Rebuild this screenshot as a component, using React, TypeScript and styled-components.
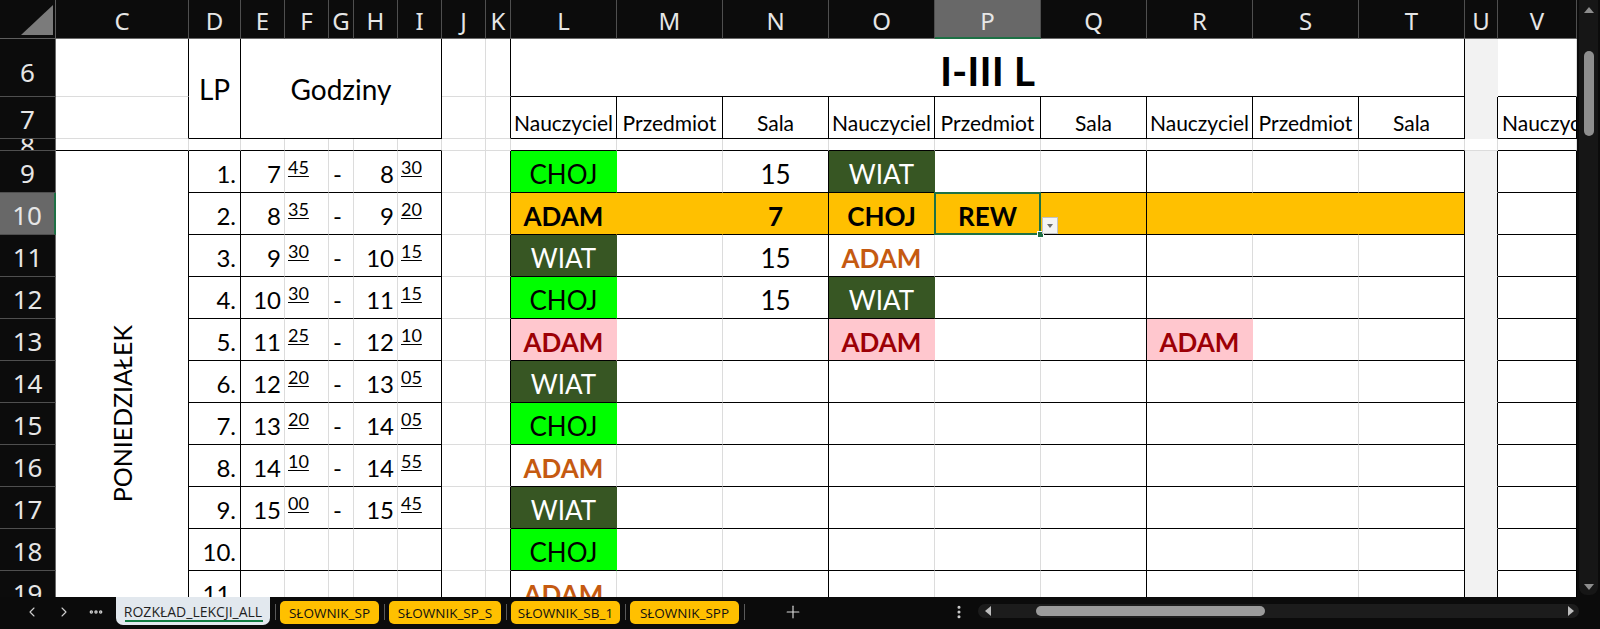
import React from 'react';
import styled, { createGlobalStyle } from 'styled-components';
import { ChevronLeft, ChevronRight, Plus, Ellipsis, EllipsisVertical } from 'lucide-react';

const GlobalStyle = createGlobalStyle`
  html, body {
    margin: 0;
    padding: 0;
    background: #0b0b0b;
    overflow: hidden;
  }
  * {
    box-sizing: border-box;
  }
`;

const GRID = '#dcdcdc';
const BLACK = '#000000';
const WHITE = '#ffffff';
const GREEN = '#00ff00';
const DARK_GREEN = '#375623';
const ORANGE = '#ffc000';
const PINK = '#ffc7ce';
const DARK_RED = '#9c0006';
const RUST = '#c55a11';
const GAP_GRAY = '#f2f2f2';
const SELECT = '#1e7145';

const COLS = ['C', 'D', 'E', 'F', 'G', 'H', 'I', 'J', 'K', 'L', 'M', 'N', 'O', 'P', 'Q', 'R', 'S', 'T', 'U', 'V'];
const WIDTHS = [133, 52, 44, 44, 25, 44, 44, 44, 25, 106, 106, 106, 106, 106, 106, 106, 106, 106, 33, 79];
const FIRST_ROW = 6;
const LAST_ROW = 21;

const KINDS = {
  plain: { size: 24, justify: 'center', items: 'flex-end', pad: '0 0 6px' },
  title: { size: 28, justify: 'center', items: 'center', pad: '0' },
  big: { size: 41, justify: 'center', items: 'flex-end', pad: '0 0 5px' },
  head: { size: 21, justify: 'center', items: 'flex-end', pad: '0 0 5px' },
  headLeft: { size: 21, justify: 'flex-start', items: 'flex-end', pad: '0 0 5px 4px' },
  lp: { size: 24, justify: 'flex-end', items: 'flex-end', pad: '0 4px 6px 0' },
  hour: { size: 24, justify: 'flex-end', items: 'flex-end', pad: '0 3px 6px 0' },
  min: { size: 18, justify: 'flex-start', items: 'flex-end', pad: '0 0 16px 3px' },
  dash: { size: 24, justify: 'flex-start', items: 'flex-end', pad: '0 0 6px 4px' },
  name: { size: 26, justify: 'center', items: 'flex-end', pad: '0 0 5px' },
  day: { size: 25, justify: 'center', items: 'center', pad: '0 0 20px' },
} as const;

type Kind = keyof typeof KINDS;

type Spec = {
  id: string;
  c: number;
  r: number;
  cs: number;
  rs: number;
  bg: string;
  rb: string;
  bb: string;
  text?: string;
  kind: Kind;
  color: string;
  bold: boolean;
  selected?: boolean;
  hidden?: boolean;
};

type Tag = { bg?: string; color?: string; bold?: boolean };

const CHOJ: Tag = { bg: GREEN, color: BLACK };
const WIAT: Tag = { bg: DARK_GREEN, color: WHITE };
const ADAM_PINK: Tag = { bg: PINK, color: DARK_RED, bold: true };
const ADAM_RUST: Tag = { color: RUST, bold: true };
const BOLD: Tag = { bold: true };

const ENTRIES: [string, number, string, Tag][] = [
  ['L', 9, 'CHOJ', CHOJ], ['N', 9, '15', {}], ['O', 9, 'WIAT', WIAT],
  ['L', 10, 'ADAM', BOLD], ['N', 10, '7', BOLD], ['O', 10, 'CHOJ', BOLD], ['P', 10, 'REW', BOLD],
  ['L', 11, 'WIAT', WIAT], ['N', 11, '15', {}], ['O', 11, 'ADAM', ADAM_RUST],
  ['L', 12, 'CHOJ', CHOJ], ['N', 12, '15', {}], ['O', 12, 'WIAT', WIAT],
  ['L', 13, 'ADAM', ADAM_PINK], ['O', 13, 'ADAM', ADAM_PINK], ['R', 13, 'ADAM', ADAM_PINK],
  ['L', 14, 'WIAT', WIAT],
  ['L', 15, 'CHOJ', CHOJ],
  ['L', 16, 'ADAM', ADAM_RUST],
  ['L', 17, 'WIAT', WIAT],
  ['L', 18, 'CHOJ', CHOJ],
  ['L', 19, 'ADAM', ADAM_RUST],
];

const TIMES: [string, string, string, string][] = [
  ['7', '45', '8', '30'],
  ['8', '35', '9', '20'],
  ['9', '30', '10', '15'],
  ['10', '30', '11', '15'],
  ['11', '25', '12', '10'],
  ['12', '20', '13', '05'],
  ['13', '20', '14', '05'],
  ['14', '10', '14', '55'],
  ['15', '00', '15', '45'],
];

const HEADERS = ['Nauczyciel', 'Przedmiot', 'Sala'];

const SHEETS = [
  { name: 'SŁOWNIK_SP', width: 99 },
  { name: 'SŁOWNIK_SP_S', width: 112 },
  { name: 'SŁOWNIK_SB_1', width: 109 },
  { name: 'SŁOWNIK_SPP', width: 109 },
];

const range = (a: string, b: string) => COLS.slice(COLS.indexOf(a), COLS.indexOf(b) + 1);

function buildCells(): Spec[] {
  const map: Record<string, Spec> = {};
  for (let n = FIRST_ROW; n <= LAST_ROW; n++) {
    COLS.forEach((l, i) => {
      map[l + n] = {
        id: l + n, c: i + 2, r: n - 4, cs: 1, rs: 1,
        bg: WHITE, rb: GRID, bb: GRID, kind: 'plain', color: BLACK, bold: false,
      };
    });
  }
  const at = (l: string, n: number) => map[l + n];
  const merge = (from: string, n1: number, to: string, n2: number) => {
    const a = COLS.indexOf(from);
    const b = COLS.indexOf(to);
    for (let n = n1; n <= n2; n++) {
      for (let i = a; i <= b; i++) {
        if (n !== n1 || i !== a) map[COLS[i] + n].hidden = true;
      }
    }
    const cell = map[from + n1];
    cell.cs = b - a + 1;
    cell.rs = n2 - n1 + 1;
    return cell;
  };

  // title block, rows 6-7
  at('C', 6).rb = BLACK;
  at('C', 7).rb = BLACK;
  Object.assign(merge('D', 6, 'D', 7), { rb: BLACK, bb: BLACK, text: 'LP', kind: 'title' });
  Object.assign(merge('E', 6, 'I', 7), { rb: BLACK, bb: BLACK, text: 'Godziny', kind: 'title' });
  at('K', 6).rb = BLACK;
  at('K', 7).rb = BLACK;
  Object.assign(merge('L', 6, 'T', 6), { rb: BLACK, bb: BLACK, text: 'I-III L', kind: 'big', bold: true });
  range('L', 'T').forEach((l, i) => {
    Object.assign(at(l, 7), { rb: BLACK, bb: BLACK, text: HEADERS[i % 3], kind: 'head' });
  });
  at('U', 6).bg = GAP_GRAY;
  Object.assign(at('U', 7), { bg: GAP_GRAY, rb: BLACK });
  at('V', 6).bb = BLACK;
  Object.assign(at('V', 7), { rb: BLACK, bb: BLACK, text: 'Nauczyciel', kind: 'headLeft' });

  // spacer row 8
  range('C', 'I').forEach((l) => { at(l, 8).bb = BLACK; });
  range('L', 'T').forEach((l) => { at(l, 8).bb = BLACK; });
  at('V', 8).bb = BLACK;

  // timetable body
  Object.assign(merge('C', 9, 'C', LAST_ROW), { rb: BLACK, bb: BLACK, text: 'PONIEDZIAŁEK', kind: 'day' });
  for (let n = 9; n <= LAST_ROW; n++) {
    Object.assign(at('D', n), { rb: BLACK, bb: BLACK, text: `${n - 8}.`, kind: 'lp' });
    range('E', 'H').forEach((l) => { at(l, n).bb = BLACK; });
    Object.assign(at('I', n), { rb: BLACK, bb: BLACK });
    at('K', n).rb = BLACK;
    range('L', 'T').forEach((l) => { at(l, n).bb = BLACK; });
    ['N', 'Q', 'T'].forEach((l) => { at(l, n).rb = BLACK; });
    Object.assign(at('U', n), { bg: GAP_GRAY, rb: BLACK });
    Object.assign(at('V', n), { rb: BLACK, bb: BLACK });
    const t = TIMES[n - 9];
    if (t) {
      Object.assign(at('E', n), { text: t[0], kind: 'hour' });
      Object.assign(at('F', n), { text: t[1], kind: 'min' });
      Object.assign(at('G', n), { text: '-', kind: 'dash' });
      Object.assign(at('H', n), { text: t[2], kind: 'hour' });
      Object.assign(at('I', n), { text: t[3], kind: 'min' });
    }
  }
  range('L', 'T').forEach((l) => { at(l, 10).bg = ORANGE; });
  ENTRIES.forEach(([l, n, text, tag]) => {
    const cell = at(l, n);
    cell.text = text;
    cell.kind = 'name';
    if (tag.bg) cell.bg = tag.bg;
    if (tag.color) cell.color = tag.color;
    if (tag.bold) cell.bold = true;
  });
  at('P', 10).selected = true;

  // fills hide the gridlines around them
  Object.values(map).forEach((cell) => {
    if (cell.bg === WHITE) return;
    if (cell.rb === GRID) cell.rb = cell.bg;
    if (cell.bb === GRID) cell.bb = cell.bg;
  });

  return Object.values(map).filter((c) => !c.hidden);
}

const CELLS = buildCells();

const Frame = styled.div`
  width: 1600px;
  height: 629px;
  display: flex;
  flex-direction: column;
  background: #0b0b0b;
`;

const Workspace = styled.div`
  height: 597px;
  display: flex;
`;

const Sheet = styled.div`
  width: 1577px;
  height: 597px;
  overflow: hidden;
  background: #ffffff;
`;

const Grid = styled.div`
  display: grid;
  grid-template-columns: 56px ${WIDTHS.map((w) => `${w}px`).join(' ')};
  grid-template-rows: 39px 58px 42px 12px repeat(13, 42px);
`;

const Corner = styled.div`
  grid-column: 1;
  grid-row: 1;
  background: #0c0c0c;
  border-right: 1px solid #5e5e5e;
  border-bottom: 1px solid #5e5e5e;
`;

const ColHead = styled.div<{ $c: number; $active: boolean }>`
  grid-column: ${(p) => p.$c};
  grid-row: 1;
  display: flex;
  align-items: center;
  justify-content: center;
  padding-top: 4px;
  background: ${(p) => (p.$active ? '#686868' : '#0c0c0c')};
  border-right: 1px solid #4f4f4f;
  border-bottom: ${(p) => (p.$active ? `2px solid ${SELECT}` : '1px solid #6a6a6a')};
  color: #e6e6e6;
  font-family: "Noto Sans", "Open Sans", sans-serif;
  font-size: 24px;
  line-height: 24px;
`;

const RowHead = styled.div<{ $r: number; $active: boolean; $shift: number }>`
  grid-column: 1;
  grid-row: ${(p) => p.$r};
  display: flex;
  align-items: center;
  justify-content: center;
  overflow: hidden;
  padding-top: ${(p) => p.$shift}px;
  background: ${(p) => (p.$active ? '#686868' : '#0c0c0c')};
  border-right: ${(p) => (p.$active ? `2px solid ${SELECT}` : '1px solid #6a6a6a')};
  border-bottom: 1px solid #4f4f4f;
  color: #e6e6e6;
  font-family: "Noto Sans", "Open Sans", sans-serif;
  font-size: 26px;
  line-height: 26px;
`;

const Cell = styled.div<{
  $c: number; $r: number; $cs: number; $rs: number;
  $bg: string; $rb: string; $bb: string;
  $size: number; $bold: boolean; $color: string;
  $justify: string; $items: string; $pad: string;
  $underline: boolean; $selected: boolean;
}>`
  grid-column: ${(p) => p.$c} / span ${(p) => p.$cs};
  grid-row: ${(p) => p.$r} / span ${(p) => p.$rs};
  display: flex;
  justify-content: ${(p) => p.$justify};
  align-items: ${(p) => p.$items};
  padding: ${(p) => p.$pad};
  min-width: 0;
  background: ${(p) => p.$bg};
  border-right: 1px solid ${(p) => p.$rb};
  border-bottom: 1px solid ${(p) => p.$bb};
  color: ${(p) => p.$color};
  font-family: Lato, "Open Sans", sans-serif;
  font-size: ${(p) => p.$size}px;
  line-height: ${(p) => p.$size}px;
  font-weight: ${(p) => (p.$bold ? 700 : 400)};
  white-space: nowrap;
  text-decoration: ${(p) => (p.$underline ? 'underline' : 'none')};
  text-decoration-thickness: 1px;
  text-underline-offset: 2px;
  position: ${(p) => (p.$selected ? 'relative' : 'static')};
  z-index: ${(p) => (p.$selected ? 3 : 'auto')};
`;

const DayText = styled.span`
  writing-mode: vertical-rl;
  transform: rotate(180deg);
`;

const Selection = styled.div`
  position: absolute;
  top: -1px;
  left: -1px;
  right: -1px;
  bottom: -1px;
  border: 2px solid ${SELECT};
  pointer-events: none;
`;

const FillHandle = styled.div`
  position: absolute;
  right: -5px;
  bottom: -5px;
  width: 7px;
  height: 7px;
  background: ${SELECT};
  border: 1px solid #ffffff;
`;

const DropButton = styled.div`
  position: absolute;
  left: 107px;
  top: 24px;
  width: 16px;
  height: 17px;
  background: #f4f4f4;
  border: 1px solid #c2c2c2;
  display: flex;
  align-items: center;
  justify-content: center;
`;

const DownTriangle = styled.div<{ $color: string; $w: number }>`
  width: 0;
  height: 0;
  border-left: ${(p) => p.$w}px solid transparent;
  border-right: ${(p) => p.$w}px solid transparent;
  border-top: ${(p) => p.$w + 1}px solid ${(p) => p.$color};
`;

const UpTriangle = styled.div`
  width: 0;
  height: 0;
  border-left: 5px solid transparent;
  border-right: 5px solid transparent;
  border-bottom: 6px solid #8d8d8d;
`;

const SideTriangle = styled.div<{ $dir: 'left' | 'right' }>`
  width: 0;
  height: 0;
  border-top: 5px solid transparent;
  border-bottom: 5px solid transparent;
  ${(p) => (p.$dir === 'left' ? 'border-right: 6px solid #bdbdbd;' : 'border-left: 6px solid #bdbdbd;')}
`;

const VScroll = styled.div`
  width: 23px;
  height: 597px;
  background: #0b0b0b;
  padding: 0 2px 2px;
`;

const VTrack = styled.div`
  height: 100%;
  background: #161616;
  border-radius: 0 0 8px 8px;
  display: flex;
  flex-direction: column;
  align-items: center;
  padding: 7px 0 5px;
`;

const VThumb = styled.div`
  width: 10px;
  height: 85px;
  margin-top: 38px;
  border-radius: 5px;
  background: #8e8e8e;
`;

const Filler = styled.div`
  flex: 1;
`;

const TabBar = styled.div`
  height: 32px;
  display: flex;
  align-items: flex-start;
  padding: 0 21px 0 16px;
  background: #0b0b0b;
  font-family: "Open Sans", "Noto Sans", sans-serif;
`;

const NavButton = styled.div`
  width: 32px;
  height: 30px;
  display: flex;
  align-items: center;
  justify-content: center;
  color: #cfcfcf;
`;

const ActiveTab = styled.div`
  position: relative;
  margin-left: 4px;
  width: 154px;
  height: 28px;
  display: flex;
  align-items: center;
  justify-content: center;
  background: #e2e8ee;
  border-radius: 0 0 7px 7px;
  color: #1f1f1f;
  font-size: 14px;
  &::after {
    content: '';
    position: absolute;
    left: 9px;
    right: 7px;
    bottom: 3px;
    height: 2px;
    background: #107c41;
  }
`;

const TabSep = styled.div`
  width: 1px;
  height: 16px;
  margin: 7px 4px 0 5px;
  background: #5a5a5a;
`;

const SheetTab = styled.div<{ $w: number }>`
  width: ${(p) => p.$w}px;
  height: 23px;
  margin-top: 4px;
  display: flex;
  align-items: center;
  justify-content: center;
  background: ${ORANGE};
  border-radius: 5px;
  color: #111111;
  font-size: 13.5px;
`;

const AddButton = styled.div`
  width: 40px;
  height: 30px;
  margin-left: 24px;
  display: flex;
  align-items: center;
  justify-content: center;
  color: #d8d8d8;
`;

const MoreButton = styled.div`
  width: 20px;
  height: 30px;
  margin-left: auto;
  margin-right: 9px;
  display: flex;
  align-items: center;
  justify-content: center;
  color: #cfcfcf;
`;

const HTrack = styled.div`
  width: 601px;
  height: 14px;
  margin-top: 7px;
  display: flex;
  align-items: center;
  padding: 0 5px 0 7px;
  border-radius: 7px;
  background: #1c1c1c;
`;

const HThumb = styled.div`
  width: 229px;
  height: 10px;
  margin-left: 45px;
  border-radius: 5px;
  background: #9b9b9b;
`;

const App = () => {
  return (
    <Frame>
      <GlobalStyle />
      <Workspace>
        <Sheet>
          <Grid>
            <Corner>
              <svg width="56" height="39" viewBox="0 0 56 39">
                <polygon points="53,5 53,35 21,35" fill="#7b7b7b" />
              </svg>
            </Corner>
            {COLS.map((l, i) => (
              <ColHead key={l} $c={i + 2} $active={l === 'P'}>{l}</ColHead>
            ))}
            {Array.from({ length: LAST_ROW - FIRST_ROW + 1 }, (_, i) => FIRST_ROW + i).map((n) => (
              <RowHead key={n} $r={n - 4} $active={n === 10} $shift={n === 6 ? 8 : n === 8 ? 0 : 3}>
                {n}
              </RowHead>
            ))}
            {CELLS.map((s) => {
              const k = KINDS[s.kind];
              return (
                <Cell
                  key={s.id}
                  $c={s.c}
                  $r={s.r}
                  $cs={s.cs}
                  $rs={s.rs}
                  $bg={s.bg}
                  $rb={s.rb}
                  $bb={s.bb}
                  $size={k.size}
                  $bold={s.bold}
                  $color={s.color}
                  $justify={k.justify}
                  $items={k.items}
                  $pad={k.pad}
                  $underline={s.kind === 'min'}
                  $selected={!!s.selected}
                >
                  {s.kind === 'day' ? <DayText>{s.text}</DayText> : s.text}
                  {s.selected && (
                    <>
                      <Selection>
                        <FillHandle />
                      </Selection>
                      <DropButton>
                        <DownTriangle $color="#6d6d6d" $w={3} />
                      </DropButton>
                    </>
                  )}
                </Cell>
              );
            })}
          </Grid>
        </Sheet>
        <VScroll>
          <VTrack>
            <UpTriangle />
            <VThumb />
            <Filler />
            <DownTriangle $color="#8d8d8d" $w={5} />
          </VTrack>
        </VScroll>
      </Workspace>
      <TabBar>
        <NavButton><ChevronLeft size={16} strokeWidth={1.6} /></NavButton>
        <NavButton><ChevronRight size={16} strokeWidth={1.6} /></NavButton>
        <NavButton><Ellipsis size={16} strokeWidth={3.2} /></NavButton>
        <ActiveTab>ROZKŁAD_LEKCJI_ALL</ActiveTab>
        {SHEETS.map((s) => (
          <React.Fragment key={s.name}>
            <TabSep />
            <SheetTab $w={s.width}>{s.name}</SheetTab>
          </React.Fragment>
        ))}
        <TabSep />
        <AddButton><Plus size={20} strokeWidth={1.4} /></AddButton>
        <MoreButton><EllipsisVertical size={16} strokeWidth={2.6} /></MoreButton>
        <HTrack>
          <SideTriangle $dir="left" />
          <HThumb />
          <Filler />
          <SideTriangle $dir="right" />
        </HTrack>
      </TabBar>
    </Frame>
  );
};

export default App;
